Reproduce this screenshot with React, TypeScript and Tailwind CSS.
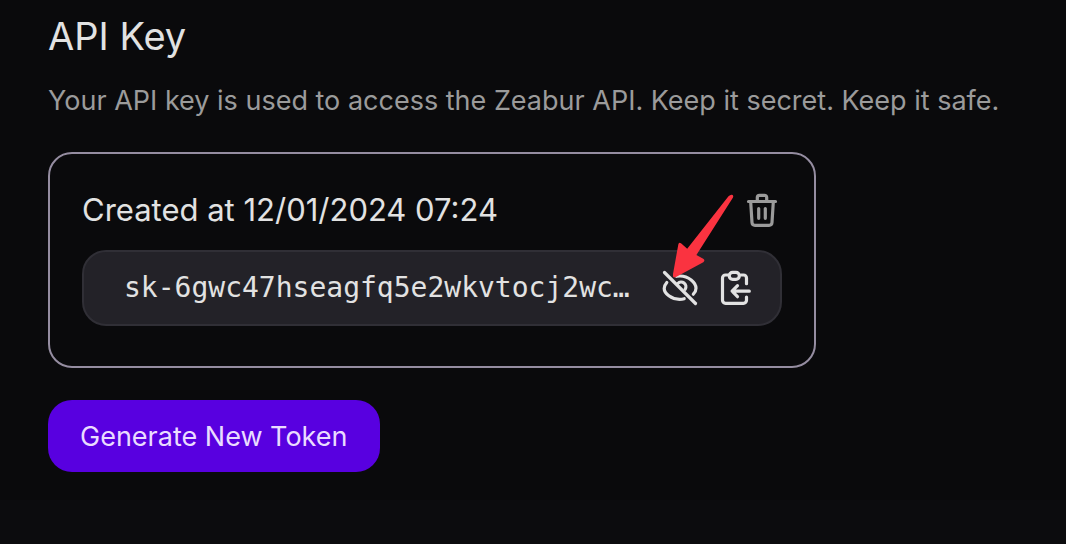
function TrashIcon() {
  return (
    <svg width="36" height="40" viewBox="0 0 36 40" fill="none" stroke="currentColor" strokeWidth="3.2" strokeLinecap="round" strokeLinejoin="round" aria-hidden="true">
      <path d="M4.5 11.5h27M13.3 11V7.5a2.2 2.2 0 0 1 2.2-2.2h5a2.2 2.2 0 0 1 2.2 2.2V11" />
      <path d="M6.7 12l1.3 20.5a3 3 0 0 0 3 2.8h14a3 3 0 0 0 3-2.8L29.3 12M14.7 18.5v9.8M21.3 18.5v9.8" />
    </svg>
  );
}

function EyeOffIcon() {
  return (
    <svg width="40" height="40" viewBox="0 0 40 40" fill="none" stroke="currentColor" strokeWidth="3.2" strokeLinecap="round" aria-hidden="true">
      <path d="M4.5 4.5L35.5 35.5" />
      <path d="M6.8 14.5C5 16.6 4.2 18.6 4.2 20.4C4.2 25.5 11.5 31.3 19.5 31.3C21.2 31.3 22.8 31.1 24.2 30.7" />
      <path d="M16.5 8.3C17.6 8.1 18.8 8 20 8C28.5 8 36 14.5 36 20.2C36 22.5 34.9 24.6 33.3 26.2" />
      <path d="M17.8 15.5A4.7 4.7 0 0 1 25.2 21.2" />
    </svg>
  );
}

function ClipboardIcon() {
  return (
    <svg width="40" height="40" viewBox="0 0 40 40" fill="none" stroke="currentColor" strokeWidth="3.2" strokeLinecap="round" strokeLinejoin="round" aria-hidden="true">
      <path d="M12 7H9.5A3 3 0 0 0 6.5 10V32.3A3 3 0 0 0 9.5 35.3H27.5A3 3 0 0 0 30.5 32.3V29" />
      <path d="M25 7H27.5A3 3 0 0 1 30.5 10V15.7" />
      <rect x="13.3" y="4.3" width="10" height="7" rx="3.3" />
      <path d="M33.3 23.2H16.3M21.5 17.7L16.1 23.2L21.5 28.7" />
    </svg>
  );
}

export default function App() {
  return (
    <div className="flex min-h-screen flex-col bg-[#0c0c0e] font-['Inter','Liberation_Sans',sans-serif] text-[#e2e2e2]">
      <main className="bg-[#0a0a0c] px-12 pt-3 pb-7">
        <h1 className="text-[38px] leading-12">API Key</h1>
        <p className="mt-5 text-[27px] leading-[42px] text-[#9b9b9b]">
          Your API key is used to access the Zeabur API. Keep it secret. Keep it safe.
        </p>
        <section className="mt-[30px] max-w-3xl rounded-3xl border-2 border-[#958da1] px-8 pt-8 pb-10">
          <div className="flex h-12 items-center justify-between">
            <h2 className="text-[31px]">Created at 12/01/2024 07:24</h2>
            <button type="button" aria-label="Delete API key" className="mr-0.5 text-[#9b9b9b]">
              <TrashIcon />
            </button>
          </div>
          <div className="mt-4 flex h-19 items-center rounded-3xl border-2 border-[#302f36] bg-[#232228] pr-6 pl-10">
            <code className="min-w-0 flex-1 truncate font-['DejaVu_Sans_Mono',monospace] text-[28px]">sk-6gwc47hseagfq5e2wkvtocj2wc…</code>
            <div className="flex gap-4">
              <button type="button" aria-label="Hide API key" className="relative">
                <EyeOffIcon />
                <svg className="pointer-events-none absolute bottom-7 left-2" width="66" height="90" viewBox="0 0 66 90" fill="#fa3340" aria-hidden="true">
                  <path d="M5 86.5Q6 88 8 87L35.3 72.2Q37.5 70.5 35.2 68.8L28.4 65L65 7.5Q65.8 5.4 64 4.8Q62.4 4.4 60.5 6.3L19.2 58.8L13.3 53.5Q10.8 51.8 10.3 54.5L5 84Z" />
                </svg>
              </button>
              <button type="button" aria-label="Copy API key">
                <ClipboardIcon />
              </button>
            </div>
          </div>
        </section>
        <button type="button" className="mt-8 h-18 rounded-3xl bg-[#5800e0] px-8 pt-0.5 text-[27px] text-[#eadcff]">
          Generate New Token
        </button>
      </main>
    </div>
  );
}
